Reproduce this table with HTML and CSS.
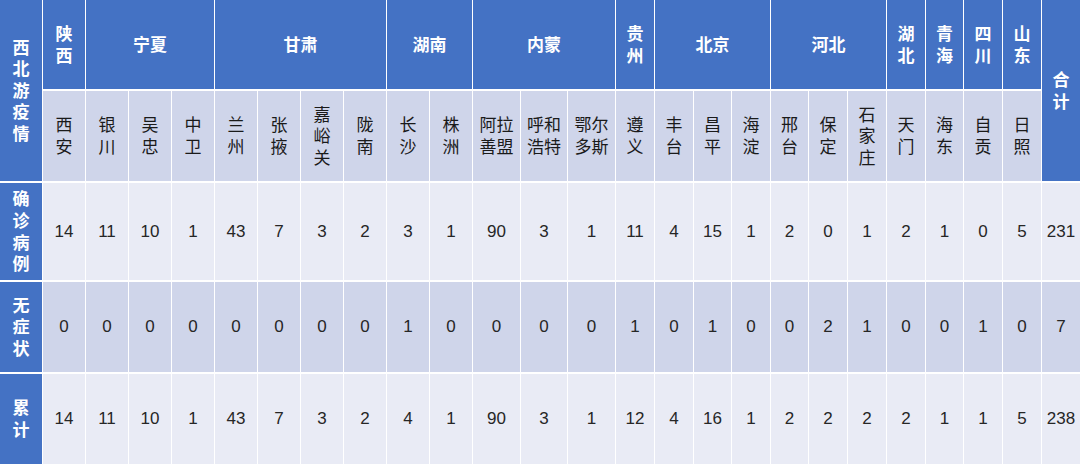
FILE: index.html
```html
<!DOCTYPE html>
<html lang="zh">
<head>
<meta charset="utf-8">
<title>西北游疫情</title>
<link rel="stylesheet" href="styles.css">
</head>
<body>
<div class="table">
  <div class="cell head corner">西<br>北<br>游<br>疫<br>情</div>
  <div class="cell head c1">陕<br>西</div>
  <div class="cell head c2">宁夏</div>
  <div class="cell head c3">甘肃</div>
  <div class="cell head c4">湖南</div>
  <div class="cell head c5">内蒙</div>
  <div class="cell head c6">贵<br>州</div>
  <div class="cell head c7">北京</div>
  <div class="cell head c8">河北</div>
  <div class="cell head c9">湖<br>北</div>
  <div class="cell head c10">青<br>海</div>
  <div class="cell head c11">四<br>川</div>
  <div class="cell head c12">山<br>东</div>
  <div class="cell head total">合<br>计</div>

  <div class="cell city">西<br>安</div>
  <div class="cell city">银<br>川</div>
  <div class="cell city">吴<br>忠</div>
  <div class="cell city">中<br>卫</div>
  <div class="cell city">兰<br>州</div>
  <div class="cell city">张<br>掖</div>
  <div class="cell city">嘉<br>峪<br>关</div>
  <div class="cell city">陇<br>南</div>
  <div class="cell city">长<br>沙</div>
  <div class="cell city">株<br>洲</div>
  <div class="cell city">阿拉<br>善盟</div>
  <div class="cell city">呼和<br>浩特</div>
  <div class="cell city">鄂尔<br>多斯</div>
  <div class="cell city">遵<br>义</div>
  <div class="cell city">丰<br>台</div>
  <div class="cell city">昌<br>平</div>
  <div class="cell city">海<br>淀</div>
  <div class="cell city">邢<br>台</div>
  <div class="cell city">保<br>定</div>
  <div class="cell city">石<br>家<br>庄</div>
  <div class="cell city">天<br>门</div>
  <div class="cell city">海<br>东</div>
  <div class="cell city">自<br>贡</div>
  <div class="cell city">日<br>照</div>

  <div class="cell head label">确<br>诊<br>病<br>例</div>
  <div class="cell num odd">14</div><div class="cell num odd">11</div><div class="cell num odd">10</div><div class="cell num odd">1</div><div class="cell num odd">43</div><div class="cell num odd">7</div><div class="cell num odd">3</div><div class="cell num odd">2</div><div class="cell num odd">3</div><div class="cell num odd">1</div><div class="cell num odd">90</div><div class="cell num odd">3</div><div class="cell num odd">1</div><div class="cell num odd">11</div><div class="cell num odd">4</div><div class="cell num odd">15</div><div class="cell num odd">1</div><div class="cell num odd">2</div><div class="cell num odd">0</div><div class="cell num odd">1</div><div class="cell num odd">2</div><div class="cell num odd">1</div><div class="cell num odd">0</div><div class="cell num odd">5</div><div class="cell num odd">231</div>

  <div class="cell head label">无<br>症<br>状</div>
  <div class="cell num even">0</div><div class="cell num even">0</div><div class="cell num even">0</div><div class="cell num even">0</div><div class="cell num even">0</div><div class="cell num even">0</div><div class="cell num even">0</div><div class="cell num even">0</div><div class="cell num even">1</div><div class="cell num even">0</div><div class="cell num even">0</div><div class="cell num even">0</div><div class="cell num even">0</div><div class="cell num even">1</div><div class="cell num even">0</div><div class="cell num even">1</div><div class="cell num even">0</div><div class="cell num even">0</div><div class="cell num even">2</div><div class="cell num even">1</div><div class="cell num even">0</div><div class="cell num even">0</div><div class="cell num even">1</div><div class="cell num even">0</div><div class="cell num even">7</div>

  <div class="cell head label">累<br>计</div>
  <div class="cell num odd">14</div><div class="cell num odd">11</div><div class="cell num odd">10</div><div class="cell num odd">1</div><div class="cell num odd">43</div><div class="cell num odd">7</div><div class="cell num odd">3</div><div class="cell num odd">2</div><div class="cell num odd">4</div><div class="cell num odd">1</div><div class="cell num odd">90</div><div class="cell num odd">3</div><div class="cell num odd">1</div><div class="cell num odd">12</div><div class="cell num odd">4</div><div class="cell num odd">16</div><div class="cell num odd">1</div><div class="cell num odd">2</div><div class="cell num odd">2</div><div class="cell num odd">2</div><div class="cell num odd">2</div><div class="cell num odd">1</div><div class="cell num odd">1</div><div class="cell num odd">5</div><div class="cell num odd">238</div>
</div>
</body>
</html>
```

FILE: styles.css
```css
html, body {
  margin: 0;
  padding: 0;
  background: #ffffff;
}

body {
  width: 1080px;
  height: 464px;
  overflow: hidden;
  font-family: "Liberation Sans", "Noto Sans CJK SC", sans-serif;
}

.table {
  display: grid;
  grid-template-columns:
    42px 42px 42px 42px 42px 42px 42px 42px 42px 42px 42px
    47px 46px 47px
    38px 38px 37px 38px 37px 38px 38px 38px 37px 38px 38px
    38px;
  grid-template-rows: 89px 90px 97px 90px 90px;
  column-gap: 1px;
  row-gap: 2px;
  width: 1080px;
  height: 464px;
  background: #ffffff;
}

.cell {
  display: flex;
  align-items: center;
  justify-content: center;
  text-align: center;
  font-size: 17px;
  line-height: 21.6px;
}

.head {
  background: #4472c4;
  color: #ffffff;
  font-weight: bold;
  padding-top: 2px;
}

.corner {
  grid-row: 1 / span 2;
  grid-column: 1;
}

.total {
  grid-row: 1 / span 2;
  grid-column: 26;
}

.c1 { grid-column: 2; }
.c2 { grid-column: 3 / span 3; }
.c3 { grid-column: 6 / span 4; }
.c4 { grid-column: 10 / span 2; }
.c5 { grid-column: 12 / span 3; }
.c6 { grid-column: 15; }
.c7 { grid-column: 16 / span 3; }
.c8 { grid-column: 19 / span 3; }
.c9 { grid-column: 22; }
.c10 { grid-column: 23; }
.c11 { grid-column: 24; }
.c12 { grid-column: 25; }

.city {
  background: #cfd5ea;
  color: #1a1a1a;
  padding-top: 2px;
}

.num {
  color: #262626;
  font-size: 17px;
}

.odd {
  background: #e9ebf5;
}

.even {
  background: #cfd5ea;
}
```
